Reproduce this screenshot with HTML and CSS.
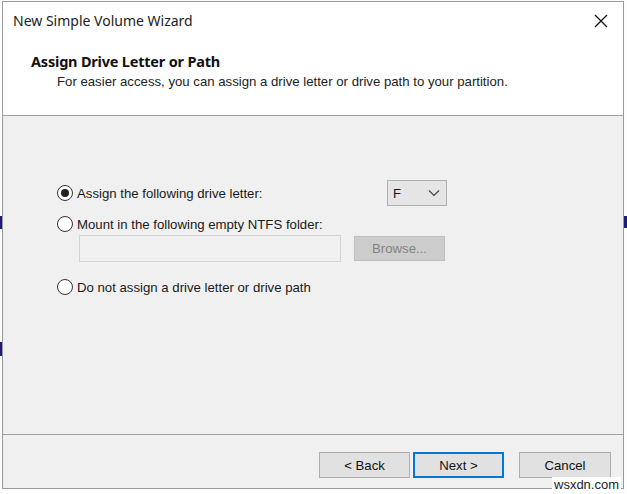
FILE: index.html
```html
<!DOCTYPE html>
<html>
<head>
<meta charset="utf-8">
<link rel="stylesheet" href="styles.css">
</head>
<body>
<div class="desk">
  <span class="bg-mark m1"></span>
  <span class="bg-mark m2"></span>
  <span class="bg-mark m3"></span>
  <div class="win">
    <div class="titlebar">
      <span class="title">New Simple Volume Wizard</span>
      <span class="close"><svg width="14" height="14" viewBox="0 0 14 14"><path d="M1 1 L13 13 M13 1 L1 13" stroke="#111" stroke-width="1.3" fill="none"/></svg></span>
    </div>
    <div class="header">
      <div class="h1">Assign Drive Letter or Path</div>
      <div class="h2">For easier access, you can assign a drive letter or drive path to your partition.</div>
    </div>
    <div class="content">
      <div class="row row1">
        <span class="radio checked"></span>
        <span class="lbl">Assign the following drive letter:</span>
        <span class="combo"><span>F</span><svg width="12" height="8" viewBox="0 0 12 8"><path d="M1 1.5 L6 6.5 L11 1.5" stroke="#444" stroke-width="1.2" fill="none"/></svg></span>
      </div>
      <div class="row row2">
        <span class="radio"></span>
        <span class="lbl">Mount in the following empty NTFS folder:</span>
      </div>
      <div class="row row2b">
        <span class="textbox"></span>
        <span class="btn disabled">Browse...</span>
      </div>
      <div class="row row3">
        <span class="radio"></span>
        <span class="lbl">Do not assign a drive letter or drive path</span>
      </div>
    </div>
    <div class="footer">
      <span class="btn">&lt; Back</span>
      <span class="btn default">Next &gt;</span>
      <span class="btn cancel">Cancel</span>
    </div>
  </div>
  <div class="watermark">wsxdn.com</div>
</div>
</body>
</html>
```
FILE: styles.css
```css
html, body { margin: 0; padding: 0; }
body {
  width: 627px;
  height: 494px;
  overflow: hidden;
  background: #fdfdfd;
  font-family: "Liberation Sans", Arial, sans-serif;
  font-size: 13.2px;
  color: #1a1a1a;
}
.desk { position: relative; width: 627px; height: 494px; }
.bg-mark { position: absolute; left: 0; width: 3px; background: #1c1c7a; }
.bg-mark.m1 { top: 215px; height: 13px; }
.bg-mark.m2 { top: 341px; height: 14px; }
.bg-mark.m3 { left: 624px; top: 215px; height: 12px; }
.win {
  position: relative;
  margin: 1px 0 0 2px;
  width: 620px;
  height: 486px;
  border: 1px solid #9a9a9a;
  display: flex;
  flex-direction: column;
  background: #f0f0f0;
}
.titlebar {
  height: 38px;
  background: #fff;
  display: flex;
  align-items: center;
  justify-content: space-between;
  padding: 0 12px 0 10px;
}
.title { font-family: "Noto Sans", sans-serif; font-size: 14px; color: #222; margin-top: -2px; }
.close { display: flex; margin-right: 3px; margin-top: -1px; }
.header {
  height: 75px;
  background: #fff;
  border-bottom: 1px solid #a0a0a0;
  padding: 0 0 0 28px;
}
.h1 { font-family: "Noto Sans", sans-serif; font-weight: bold; font-size: 14.5px; margin-top: 11px; color: #111; letter-spacing: -0.2px; }
.h2 { margin: 3px 0 0 26px; font-size: 13.2px; color: #222; }
.content {
  height: 318px;
  border-bottom: 1px solid #a0a0a0;
  padding: 0 0 0 54px;
}
.row { display: flex; align-items: center; }
.row1 { margin-top: 64px; height: 26px; }
.row2 { margin-top: 8px; height: 20px; }
.row2b { margin: 0 0 0 22px; height: 28px; }
.row3 { margin-top: 14px; height: 22px; }
.radio {
  width: 14px; height: 14px;
  border: 1px solid #333;
  border-radius: 50%;
  background: #fff;
  position: relative;
  margin-right: 4px;
  flex: none;
}
.radio.checked::after {
  content: "";
  position: absolute;
  left: 3px; top: 3px;
  width: 8px; height: 8px;
  border-radius: 50%;
  background: #222;
}
.lbl { color: #1a1a1a; }
.combo {
  margin-left: auto;
  margin-right: 176px;
  width: 60px;
  height: 26px;
  border: 1px solid #b0b0b0;
  background: #e5e5e5;
  display: flex;
  align-items: center;
  justify-content: space-between;
  padding: 0 6px 0 5px;
  box-sizing: border-box;
}
.textbox {
  border: 1px solid #d4d4d4;
  background: #f0f0f0;
  box-sizing: border-box;
  width: 262px;
  height: 27px;
}
.btn {
  display: flex;
  align-items: center;
  justify-content: center;
  width: 91px; height: 25px;
  box-sizing: border-box;
  border: 1px solid #adadad;
  background: #e1e1e1;
  color: #111;
}
.btn.disabled {
  margin-left: 13px;
  border-color: #bfbfbf;
  background: #cccccc;
  color: #838383;
}
.footer {
  flex: 1;
  display: flex;
  align-items: flex-start;
  padding: 17px 0 0 316px;
}
.footer .btn { height: 26px; }
.footer .btn.default { margin-left: 3px; border: 2px solid #0078d7; }
.footer .btn.cancel { margin-left: 15px; width: 92px; }
.watermark {
  position: absolute;
  left: 552px; top: 476px;
  font-size: 13px;
  line-height: 16px;
  color: #222;
  background: #fff;
  padding: 0 2px;
}
```
